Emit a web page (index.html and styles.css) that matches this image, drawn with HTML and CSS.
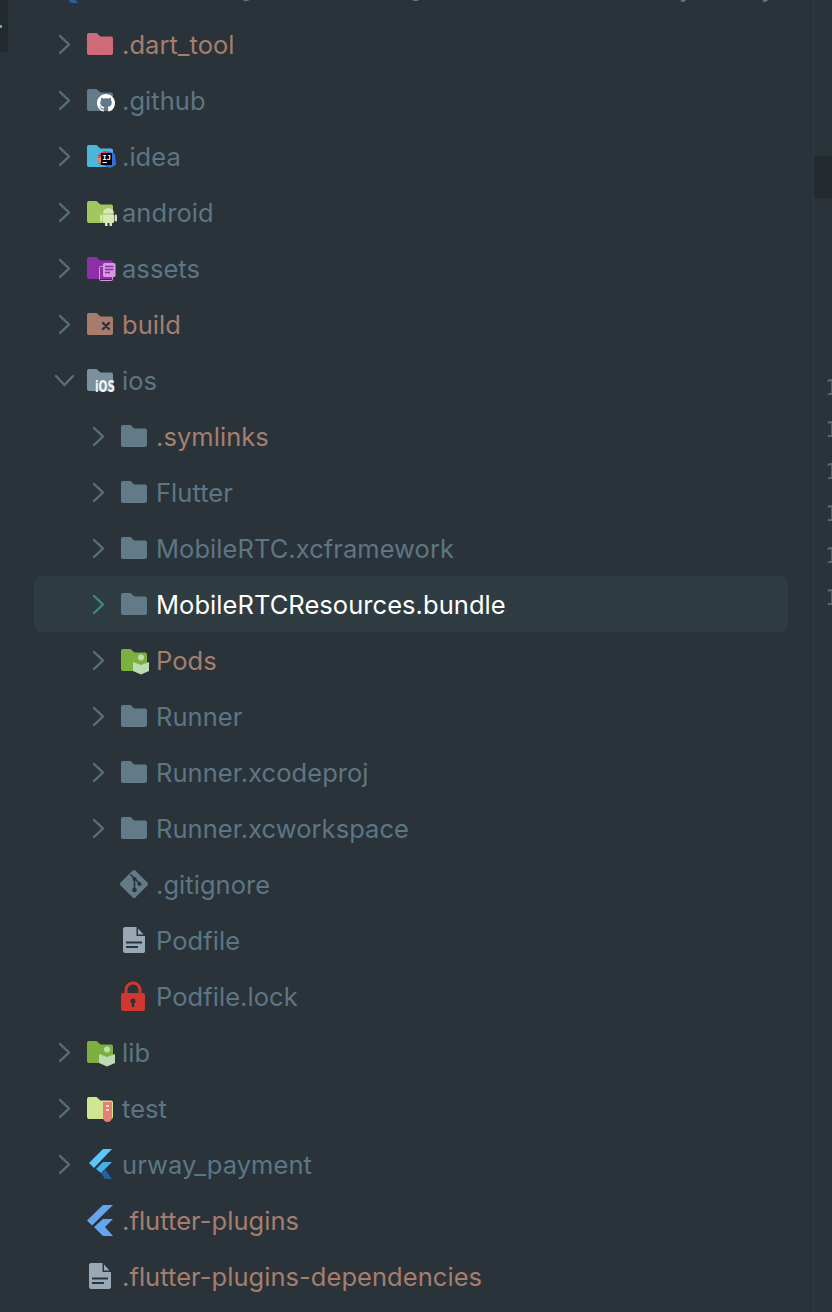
FILE: index.html
```html
<!DOCTYPE html>
<html lang="en">
<head>
  <meta charset="UTF-8" />
  <meta name="viewport" content="width=device-width, initial-scale=1.0"/>
  <title>Project tree</title>
  <link rel="stylesheet" href="styles.css">
</head>
<body>
  <svg class="defs" width="0" height="0">
    <defs>
      <path id="folder" d="M1 6a2 2 0 0 1 2-2h7.500l4 3.500H25a2 2 0 0 1 2 2V24a2 2 0 0 1-2 2H3a2 2 0 0 1-2-2z"/>
      <path id="file" d="M5 2h12l8 8.500V26a2 2 0 0 1-2 2H5a2 2 0 0 1-2-2V4a2 2 0 0 1 2-2z"/>
      <polyline id="arrow-right" points="6,2 15,10.500 6,19"/>
      <polyline id="arrow-down" points="2,6 10.500,15 19,6"/>
      <g id="book">
        <circle cx="21" cy="12.500" r="3"/>
        <path d="M13 17l8 3 8-3v9l-8 3.500-8-3.500z"/>
      </g>
    </defs>
  </svg>

  <div class="side-strip"><span class="side-mark"></span></div>

  <main class="tree">
    <div class="row root">
      <span class="arrow"></span>
      <svg class="icon" viewBox="0 0 30 30"><path class="fl-light" d="M17 0h9L8 19l-5-5z"/><path class="fl-light" d="M17 13h9l-8 8h-8z"/><path class="fl-dark" d="M14 24l4-4 8 10h-7z"/></svg>
      <span class="name muted">token_zoom [master_zoom] on /Downloads/urway/urway_zoom</span>
    </div>

    <div class="row">
      <span class="arrow"><svg viewBox="0 0 21 21"><use href="#arrow-right"/></svg></span>
      <svg class="icon" viewBox="0 0 30 30"><use class="f-red" href="#folder"/></svg>
      <span class="name ignored">.dart_tool</span>
    </div>
    <div class="row">
      <span class="arrow"><svg viewBox="0 0 21 21"><use href="#arrow-right"/></svg></span>
      <svg class="icon" viewBox="0 0 30 30">
        <use class="f-slate" href="#folder"/>
        <path class="white" transform="translate(11 9) scale(1.125)" d="M8 0C3.580 0 0 3.580 0 8c0 3.540 2.290 6.530 5.470 7.590.4.070.550-.170.550-.380 0-.190-.010-.820-.010-1.490-2.010.370-2.530-.490-2.690-.940-.090-.230-.480-.940-.820-1.130-.280-.150-.680-.520-.010-.530.630-.010 1.080.580 1.230.820.720 1.210 1.870.870 2.330.660.070-.520.280-.870.510-1.070-1.780-.2-3.640-.890-3.640-3.950 0-.870.310-1.590.820-2.150-.080-.2-.360-1.020.080-2.120 0 0 .670-.210 2.200.820.640-.180 1.320-.270 2-.270.680 0 1.360.090 2 .270 1.530-1.040 2.200-.820 2.200-.820.440 1.100.160 1.920.080 2.120.510.560.820 1.270.820 2.150 0 3.070-1.870 3.750-3.650 3.950.290.250.540.730.540 1.480 0 1.070-.010 1.930-.010 2.200 0 .210.150.460.550.380A8.013 8.013 0 0 0 16 8c0-4.420-3.580-8-8-8z"/>
      </svg>
      <span class="name muted">.github</span>
    </div>
    <div class="row">
      <span class="arrow"><svg viewBox="0 0 21 21"><use href="#arrow-right"/></svg></span>
      <svg class="icon" viewBox="0 0 30 30">
        <use class="f-sky" href="#folder"/>
        <path class="jb-red" d="M12 14l6-4 6 1-5 14-6-2z"/>
        <path class="jb-orange" d="M12 17l4-1v5l-3 1z"/>
        <path class="jb-blue" d="M22 10l7 3 1 11-6 3-5-2z"/>
        <rect class="jb-black" x="15" y="12" width="11" height="12"/>
        <text class="jb-text" x="16.500" y="18.500">IJ</text>
        <rect class="white" x="16.500" y="21" width="4.500" height="1"/>
      </svg>
      <span class="name muted">.idea</span>
    </div>
    <div class="row">
      <span class="arrow"><svg viewBox="0 0 21 21"><use href="#arrow-right"/></svg></span>
      <svg class="icon" viewBox="0 0 30 30">
        <use class="f-lime" href="#folder"/>
        <path class="robot" d="M17 16.500a5.500 5.500 0 0 1 11 0z"/>
        <path class="robot" d="M17 17.500h11V25a1 1 0 0 1-1 1h-1v3h-2.500v-3h-2v3H19v-3h-1a1 1 0 0 1-1-1z"/>
        <rect class="robot" x="14" y="17.500" width="2.400" height="7" rx="1.200"/>
        <rect class="robot" x="28.600" y="17.500" width="2.400" height="7" rx="1.200"/>
      </svg>
      <span class="name muted">android</span>
    </div>
    <div class="row">
      <span class="arrow"><svg viewBox="0 0 21 21"><use href="#arrow-right"/></svg></span>
      <svg class="icon" viewBox="0 0 30 30">
        <use class="f-purple" href="#folder"/>
        <rect class="page-back" x="13.500" y="13.500" width="13" height="14" rx="1"/>
        <rect class="page" x="17" y="10" width="12.500" height="14" rx="1.500"/>
        <path class="page-lines" d="M19 13.500h8.500M19 16.500h8.500M19 19.500h5"/>
      </svg>
      <span class="name muted">assets</span>
    </div>
    <div class="row">
      <span class="arrow"><svg viewBox="0 0 21 21"><use href="#arrow-right"/></svg></span>
      <svg class="icon" viewBox="0 0 30 30">
        <use class="f-brown" href="#folder"/>
        <path class="x-mark" d="M17 14l6 6M23 14l-6 6"/>
      </svg>
      <span class="name ignored">build</span>
    </div>
    <div class="row">
      <span class="arrow"><svg viewBox="0 0 21 21"><use href="#arrow-down"/></svg></span>
      <svg class="icon" viewBox="0 0 30 30">
        <use class="f-grey" href="#folder"/>
        <text class="ios-text" x="9" y="27" textLength="20" lengthAdjust="spacingAndGlyphs">iOS</text>
      </svg>
      <span class="name muted">ios</span>
    </div>

    <div class="row depth-1">
      <span class="arrow"><svg viewBox="0 0 21 21"><use href="#arrow-right"/></svg></span>
      <svg class="icon" viewBox="0 0 30 30"><use class="f-slate" href="#folder"/></svg>
      <span class="name ignored">.symlinks</span>
    </div>
    <div class="row depth-1">
      <span class="arrow"><svg viewBox="0 0 21 21"><use href="#arrow-right"/></svg></span>
      <svg class="icon" viewBox="0 0 30 30"><use class="f-slate" href="#folder"/></svg>
      <span class="name muted">Flutter</span>
    </div>
    <div class="row depth-1">
      <span class="arrow"><svg viewBox="0 0 21 21"><use href="#arrow-right"/></svg></span>
      <svg class="icon" viewBox="0 0 30 30"><use class="f-slate" href="#folder"/></svg>
      <span class="name muted">MobileRTC.xcframework</span>
    </div>
    <div class="row depth-1 selected">
      <span class="arrow"><svg viewBox="0 0 21 21"><use href="#arrow-right"/></svg></span>
      <svg class="icon" viewBox="0 0 30 30"><use class="f-slate" href="#folder"/></svg>
      <span class="name active">MobileRTCResources.bundle</span>
    </div>
    <div class="row depth-1">
      <span class="arrow"><svg viewBox="0 0 21 21"><use href="#arrow-right"/></svg></span>
      <svg class="icon" viewBox="0 0 30 30"><use class="f-green" href="#folder"/><use class="book" href="#book"/></svg>
      <span class="name ignored">Pods</span>
    </div>
    <div class="row depth-1">
      <span class="arrow"><svg viewBox="0 0 21 21"><use href="#arrow-right"/></svg></span>
      <svg class="icon" viewBox="0 0 30 30"><use class="f-slate" href="#folder"/></svg>
      <span class="name muted">Runner</span>
    </div>
    <div class="row depth-1">
      <span class="arrow"><svg viewBox="0 0 21 21"><use href="#arrow-right"/></svg></span>
      <svg class="icon" viewBox="0 0 30 30"><use class="f-slate" href="#folder"/></svg>
      <span class="name muted">Runner.xcodeproj</span>
    </div>
    <div class="row depth-1">
      <span class="arrow"><svg viewBox="0 0 21 21"><use href="#arrow-right"/></svg></span>
      <svg class="icon" viewBox="0 0 30 30"><use class="f-slate" href="#folder"/></svg>
      <span class="name muted">Runner.xcworkspace</span>
    </div>
    <div class="row depth-1">
      <span class="arrow"></span>
      <svg class="icon" viewBox="0 0 30 30">
        <path class="git" d="M12.600 1.600a2 2 0 0 1 2.800 0l12 12a2 2 0 0 1 0 2.800l-12 12a2 2 0 0 1-2.800 0l-12-12a2 2 0 0 1 0-2.800z"/>
        <path class="git-branch" d="M10.500 5.500l4 4v11M14.500 9.500l5 5"/>
        <circle class="git-dot" cx="14.500" cy="21" r="2.300"/>
        <circle class="git-dot" cx="14.500" cy="10" r="2"/>
        <circle class="git-dot" cx="19.500" cy="15" r="2"/>
      </svg>
      <span class="name muted">.gitignore</span>
    </div>
    <div class="row depth-1">
      <span class="arrow"></span>
      <svg class="icon" viewBox="0 0 30 30">
        <use class="file" href="#file"/>
        <path class="file-fold" d="M16.500 1.500h1.500l7.500 8v1.500h-9z"/>
        <path class="file-fold-inner" d="M18 3.500l5.500 6H18z"/>
        <path class="file-lines" d="M6 17.500h16M6 22h12"/>
      </svg>
      <span class="name muted">Podfile</span>
    </div>
    <div class="row depth-1">
      <span class="arrow"></span>
      <svg class="icon" viewBox="0 0 30 30">
        <path class="lock-arc" d="M6 13V9a7 7 0 0 1 14 0v4"/>
        <rect class="lock" x="1" y="12" width="24" height="18" rx="2"/>
        <circle class="git-dot" cx="13" cy="20" r="2.500"/>
        <rect class="git-dot" x="11.800" y="20" width="2.400" height="6"/>
      </svg>
      <span class="name muted">Podfile.lock</span>
    </div>

    <div class="row">
      <span class="arrow"><svg viewBox="0 0 21 21"><use href="#arrow-right"/></svg></span>
      <svg class="icon" viewBox="0 0 30 30"><use class="f-green" href="#folder"/><use class="book" href="#book"/></svg>
      <span class="name muted">lib</span>
    </div>
    <div class="row">
      <span class="arrow"><svg viewBox="0 0 21 21"><use href="#arrow-right"/></svg></span>
      <svg class="icon" viewBox="0 0 30 30">
        <use class="f-pale" href="#folder"/>
        <path class="tube" d="M17 9h9v15.500a4.500 4.500 0 0 1-9 0z"/>
        <path class="tube-marks" d="M20 13h3M20 17h3"/>
      </svg>
      <span class="name muted">test</span>
    </div>
    <div class="row">
      <span class="arrow"><svg viewBox="0 0 21 21"><use href="#arrow-right"/></svg></span>
      <svg class="icon" viewBox="0 0 30 30"><path class="fl-light" d="M17 0h9L8 19l-5-5z"/><path class="fl-mid" d="M17 13h9l-8 8-3 3-5-4z"/><path class="fl-dark" d="M15 24l4-4 7 10h-7z"/></svg>
      <span class="name muted">urway_payment</span>
    </div>
    <div class="row">
      <span class="arrow"></span>
      <svg class="icon" viewBox="0 0 30 30"><path class="fl-plain" d="M17 0h10L6 20.500 1 15.500z"/><path class="fl-plain" d="M17 14h10l-8 8 8 9H17l-9-9z"/></svg>
      <span class="name ignored">.flutter-plugins</span>
    </div>
    <div class="row">
      <span class="arrow"></span>
      <svg class="icon" viewBox="0 0 30 30">
        <use class="file" href="#file"/>
        <path class="file-fold" d="M16.500 1.500h1.500l7.500 8v1.500h-9z"/>
        <path class="file-fold-inner" d="M18 3.500l5.500 6H18z"/>
        <path class="file-lines" d="M6 17.500h16M6 22h12"/>
      </svg>
      <span class="name ignored">.flutter-plugins-dependencies</span>
    </div>
  </main>

  <aside class="gutter">
    <div class="thumb"></div>
    <div class="line-numbers">
      <div>10</div>
      <div>11</div>
      <div>12</div>
      <div>13</div>
      <div>14</div>
      <div>15</div>
    </div>
  </aside>
</body>
</html>
```

FILE: styles.css
```css
html, body {
  height: 100%;
}
body {
  margin: 0;
  display: flex;
  overflow: hidden;
  background-color: #2a3339;
  font-family: "Inter", "Liberation Sans", sans-serif;
}
.defs {
  position: absolute;
}

/* left edge */
.side-strip {
  flex: 0 0 8px;
  height: 52px;
  background-color: #232a2e;
  display: flex;
  align-items: center;
}
.side-mark {
  width: 2px;
  height: 3px;
  background-color: #4db6a4;
}

/* tree */
.tree {
  flex: 0 0 805px;
  padding-left: 26px;
  box-sizing: border-box;
  overflow: hidden;
}
.row {
  display: flex;
  align-items: center;
  width: 754px;
  height: 56px;
  box-sizing: border-box;
  padding-left: 20px;
  border-radius: 8px;
}
.row.root {
  margin-top: -40px;
  padding-left: 0;
  white-space: nowrap;
}
.row.root .arrow {
  flex-basis: 18px;
}
.row.root .name {
  top: 0;
}
.row.depth-1 {
  padding-left: 54px;
}
.row.selected {
  background-color: #2f3c41;
}
.arrow {
  flex: 0 0 32px;
  height: 21px;
}
.arrow svg {
  display: block;
  width: 21px;
  height: 21px;
  fill: none;
  stroke: #56707d;
  stroke-width: 2.4;
  stroke-linecap: round;
  stroke-linejoin: round;
}
.selected .arrow svg {
  stroke: #35907f;
}
.icon {
  flex: 0 0 30px;
  width: 30px;
  height: 30px;
  margin-right: 6px;
  overflow: visible;
}
.name {
  font-size: 25.5px;
  letter-spacing: 0.05px;
  line-height: 30px;
  position: relative;
  top: 1px;
}
.muted { color: #5d7684; }
.ignored { color: #a67e6e; }
.active { color: #fff; }

/* folder colours */
.f-red { fill: #cf6a79; }
.f-slate { fill: #637a88; }
.f-sky { fill: #4bb8d9; }
.f-lime { fill: #9fc65f; }
.f-purple { fill: #8e2fa8; }
.f-brown { fill: #a67c6c; }
.f-grey { fill: #7b909d; }
.f-green { fill: #7cb03f; }
.f-pale { fill: #d0e592; }

/* icon badges */
.white { fill: #fff; }
.jb-red { fill: #e0355c; }
.jb-orange { fill: #f08a2c; }
.jb-blue { fill: #2f6fe0; }
.jb-black { fill: #000; }
.jb-text {
  fill: #fff;
  font: bold 7px "DejaVu Sans Mono", monospace;
}
.robot { fill: #d6e8b8; }
.page { fill: #d39ae0; }
.page-back {
  fill: none;
  stroke: #d39ae0;
  stroke-width: 1;
}
.page-lines {
  fill: none;
  stroke: #8e2fa8;
  stroke-width: 1.400;
}
.x-mark {
  fill: none;
  stroke: #2a3339;
  stroke-width: 2.400;
  stroke-linecap: round;
}
.ios-text {
  fill: #f2f4f5;
  font: bold 16px "DejaVu Sans", sans-serif;
}
.book { fill: #bcdcb3; }
.tube { fill: #e57f76; }
.tube-marks {
  fill: none;
  stroke: #f4d5c8;
  stroke-width: 2;
}
.git { fill: #637a88; }
.git-branch {
  fill: none;
  stroke: #2a3339;
  stroke-width: 1.600;
}
.git-dot { fill: #2a3339; }
.file { fill: #9aa8b5; }
.file-fold { fill: #2a3339; }
.file-fold-inner { fill: #9aa8b5; }
.file-lines {
  fill: none;
  stroke: #2a3339;
  stroke-width: 2;
}
.lock { fill: #d0382f; }
.lock-arc {
  fill: none;
  stroke: #d0382f;
  stroke-width: 3;
}
.fl-light { fill: #5cc6f8; }
.fl-mid { fill: #45b0ea; }
.fl-dark { fill: #27609f; }
.fl-plain { fill: #64a5ee; }

/* right gutter */
.gutter {
  flex: 1;
  min-width: 0;
  border-left: 1px solid #323b42;
  overflow: hidden;
}
.thumb {
  height: 42px;
  margin-top: 156px;
  background-color: #232a2e;
}
.line-numbers {
  margin-top: 169px;
  padding-left: 11px;
  font-family: "DejaVu Sans Mono", monospace;
  font-size: 22px;
  line-height: 42px;
  color: #566d75;
  white-space: nowrap;
}
```
